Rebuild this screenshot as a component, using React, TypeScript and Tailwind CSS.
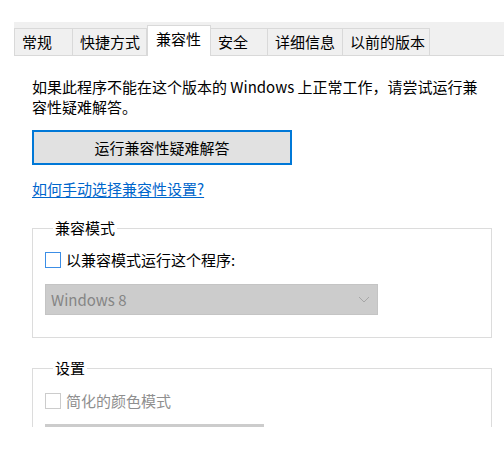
import React from "react";

const tabs = [
  { label: "常规", w: "w-[59px]" },
  { label: "快捷方式", w: "w-[74px]" },
  { label: "兼容性", w: "w-[64px]", active: true },
  { label: "安全", w: "w-[57px]" },
  { label: "详细信息", w: "w-[75px]" },
  { label: "以前的版本", w: "w-[87px]" },
];

export default function App() {
  return (
    <div
      className="w-[504px] h-[455px] bg-white text-black text-[15px] leading-[20px]"
      style={{ fontFamily: '"Noto Sans CJK SC", "Noto Sans", sans-serif' }}
    >
      <div className="h-[427px] overflow-hidden">
        <div className="pt-[22px]">
          <div className="ml-[14px] h-[34px] bg-[#f0f0f0] flex items-end border-b border-[#d9d9d9]">
            {tabs.map((t) =>
              t.active ? (
                <div
                  key={t.label}
                  className={`${t.w} h-[31px] -mb-px bg-white border border-b-0 border-[#d9d9d9] flex items-center pl-[8px] pb-[4px] relative z-10 whitespace-nowrap`}
                >
                  {t.label}
                </div>
              ) : (
                <div
                  key={t.label}
                  className={`${t.w} h-[27px] border-t border-r border-[#d9d9d9] first:border-l flex items-center pl-[7px] whitespace-nowrap`}
                >
                  {t.label}
                </div>
              )
            )}
          </div>
        </div>

        <div className="pl-[32px] pr-[12px]">
          <p className="mt-[21px] whitespace-nowrap">
            如果此程序不能在这个版本的 Windows 上正常工作，请尝试运行兼
            <br />
            容性疑难解答。
          </p>

          <button className="mt-[13px] w-[260px] h-[35px] border-2 border-[#0078d7] bg-[#e1e1e1] flex items-center justify-center text-[15px] text-black">
            运行兼容性疑难解答
          </button>

          <a className="mt-[14px] block w-fit text-[#0066cc] underline underline-offset-[2px] cursor-pointer">
            如何手动选择兼容性设置?
          </a>

          <fieldset className="mt-[19px] w-[460px] border border-[#dcdcdc] pl-[12px] pb-[22px]">
            <legend className="ml-[8px] px-[2px] leading-[20px]">兼容模式</legend>
            <label className="mt-[12px] flex items-center gap-[5px] h-[20px]">
              <span className="w-[16px] h-[16px] border border-[#3c8ee6] bg-white shrink-0" />
              <span>以兼容模式运行这个程序:</span>
            </label>
            <div className="mt-[14px] w-[333px] h-[31px] bg-[#cccccc] border border-[#c4c4c4] flex items-center justify-between pl-[5px] pr-[7px]">
              <span className="text-[#858585]">Windows 8</span>
              <svg width="12" height="7" viewBox="0 0 12 7" fill="none">
                <polyline points="1,1 6,6 11,1" stroke="#a6a6a6" strokeWidth="1" />
              </svg>
            </div>
          </fieldset>

          <fieldset className="mt-[20px] w-[460px] border border-[#dcdcdc] pl-[12px] pb-[22px]">
            <legend className="ml-[8px] px-[2px] leading-[20px]">设置</legend>
            <label className="mt-[13px] flex items-center gap-[5px] h-[20px]">
              <span className="w-[16px] h-[16px] border border-[#cccccc] bg-white shrink-0" />
              <span className="text-[#8f8f8f]">简化的颜色模式</span>
            </label>
            <div className="mt-[13px] w-[219px] h-[31px] bg-[#cccccc]" />
          </fieldset>
        </div>
      </div>
    </div>
  );
}
